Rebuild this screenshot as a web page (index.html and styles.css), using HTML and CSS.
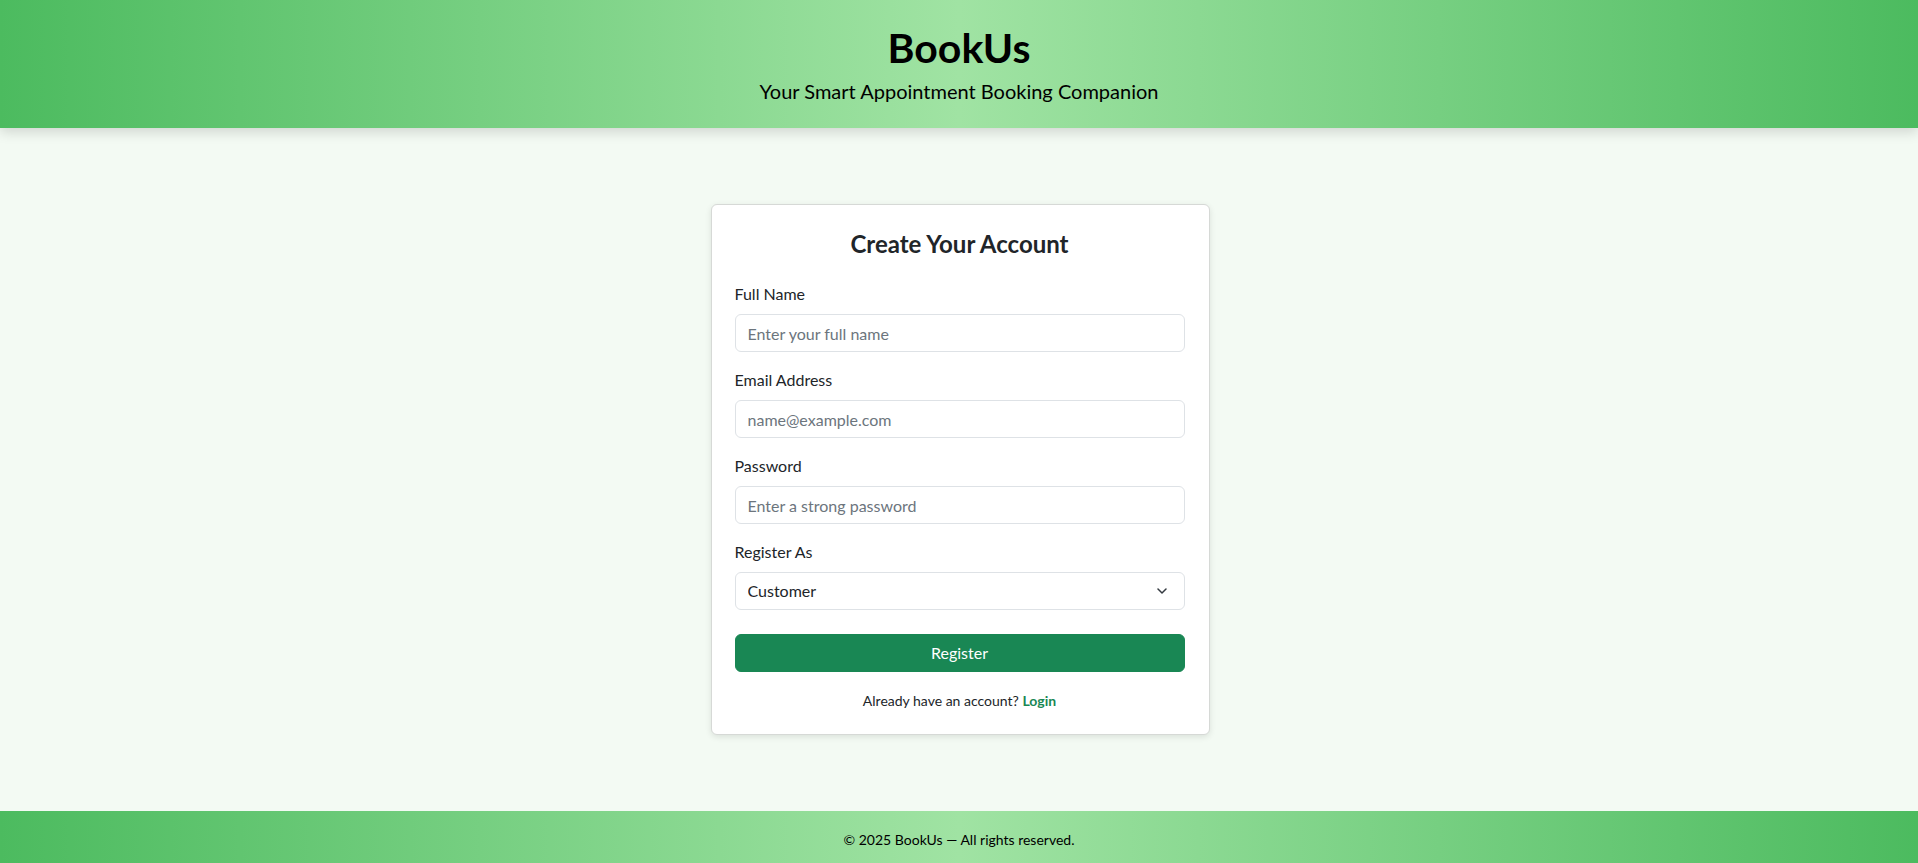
FILE: index.html
```html
<!DOCTYPE html>
<html lang="en">
<head>
<meta charset="utf-8">
<title>BookUs - Register</title>
<link rel="stylesheet" href="styles.css">
</head>
<body>
<header class="site-header">
  <h1 class="brand">BookUs</h1>
  <p class="tagline">Your Smart Appointment Booking Companion</p>
</header>
<main class="main">
  <div class="card">
    <h4 class="card-title">Create Your Account</h4>
    <form class="form">
      <div class="field">
        <label class="label">Full Name</label>
        <input class="control" type="text" placeholder="Enter your full name">
      </div>
      <div class="field">
        <label class="label">Email Address</label>
        <input class="control" type="email" placeholder="name@example.com">
      </div>
      <div class="field">
        <label class="label">Password</label>
        <input class="control" type="password" placeholder="Enter a strong password">
      </div>
      <div class="field field-last">
        <label class="label">Register As</label>
        <div class="select-wrap">
          <select class="control select">
            <option>Customer</option>
            <option>Service Provider</option>
          </select>
          <svg class="chevron" width="10" height="6" viewBox="0 0 10 6"><path d="M1 1l4 4 4-4" fill="none" stroke="#343a40" stroke-width="1.5" stroke-linecap="round" stroke-linejoin="round"/></svg>
        </div>
      </div>
      <button type="button" class="btn">Register</button>
    </form>
    <p class="switch">Already have an account? <a href="#" class="link">Login</a></p>
  </div>
</main>
<footer class="site-footer">© 2025 BookUs — All rights reserved.</footer>
</body>
</html>
```
FILE: styles.css
```css
* { box-sizing: border-box; }
html, body { height: 100%; }
body {
  margin: 0;
  font-family: Lato, "Noto Sans", "Liberation Sans", sans-serif;
  font-size: 16px;
  line-height: 1.5;
  color: #212529;
  background: #f3faf3;
  display: flex;
  flex-direction: column;
  min-height: 100vh;
}
.site-header {
  background: linear-gradient(to right, #4cbb5f 0%, #a0e3a3 50%, #4cbb5f 100%);
  text-align: center;
  padding: 24px 0 22px;
  box-shadow: 0 4px 12px rgba(0,0,0,0.15);
  color: #000;
  position: relative;
  z-index: 1;
}
.brand {
  margin: 0 0 4px;
  font-size: 41px;
  line-height: 48px;
  font-weight: 700;
}
.tagline {
  margin: 0;
  font-size: 20px;
  line-height: 30px;
}
.main {
  flex: 1;
  display: flex;
  align-items: center;
  justify-content: center;
  padding-left: 2px;
}
.card {
  width: 499px;
  background: #fff;
  border: 1px solid #d6d9d6;
  border-radius: 6px;
  box-shadow: 0 2px 6px rgba(0,0,0,0.1);
  padding: 24px 24px 23px 23px;
}
.card-title {
  margin: 0 0 24px;
  text-align: center;
  font-size: 24px;
  line-height: 29px;
  font-weight: 700;
  color: #212529;
}
.form { display: flex; flex-direction: column; }
.field { margin-bottom: 16px; display: flex; flex-direction: column; }
.field-last { margin-bottom: 24px; }
.label { margin-bottom: 8px; line-height: 24px; }
.control {
  width: 100%;
  height: 38px;
  padding: 6px 12px;
  font: inherit;
  color: #212529;
  background: #fff;
  border: 1px solid #dee2e6;
  border-radius: 6px;
}
.control::placeholder { color: #6c757d; opacity: 1; }
.select-wrap { position: relative; }
.select { appearance: none; -webkit-appearance: none; padding-right: 36px; }
.chevron {
  position: absolute;
  right: 18px;
  top: 16px;
  pointer-events: none;
}
.btn {
  height: 38px;
  width: 100%;
  border: 1px solid #198754;
  background: #198754;
  color: #fff;
  font: inherit;
  border-radius: 6px;
}
.switch {
  margin: 18px 0 0;
  text-align: center;
  font-size: 14px;
  line-height: 21px;
}
.link { color: #198754; font-weight: 700; text-decoration: none; }
.site-footer {
  background: linear-gradient(to right, #4cbb5f 0%, #a0e3a3 50%, #4cbb5f 100%);
  text-align: center;
  height: 52px;
  line-height: 21px;
  padding: 18px 0 13px;
  font-size: 14px;
  color: #000;
}
```
